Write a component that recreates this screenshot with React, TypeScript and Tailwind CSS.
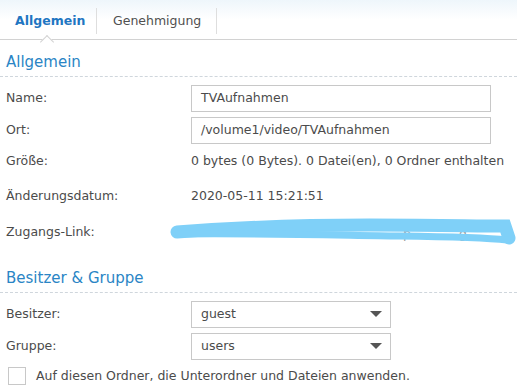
import React from 'react';

const font = { fontFamily: '"DejaVu Sans", Verdana, sans-serif' };

const SectionTitle: React.FC<{ title: string }> = ({ title }) => (
  <div className="px-[6px] pb-[5px] border-b border-dashed border-[#cfd6dc] text-[15px] text-[#2a85c5] leading-[18px]">
    {title}
  </div>
);

const Row: React.FC<{ label: string; children: React.ReactNode; h?: string }> = ({ label, children, h = 'h-[27px]' }) => (
  <div className={`flex items-center ${h}`}>
    <div className="w-[191px] pl-[6px] shrink-0">{label}</div>
    {children}
  </div>
);

const Select: React.FC<{ value: string }> = ({ value }) => (
  <div className="w-[200px] h-[27px] border border-[#c8c8c8] flex items-center justify-between pl-[9px] pr-[8px]">
    <span>{value}</span>
    <svg width="12" height="7" viewBox="0 0 12 7">
      <path d="M0 0 L12 0 L6 6 Z" fill="#555" />
    </svg>
  </div>
);

export default function App() {
  return (
    <div className="w-[517px] h-[392px] overflow-hidden bg-white text-[12.5px] text-[#4b4b4b]" style={font}>
      {/* Tabs */}
      <div className="relative h-[40px] pt-[3px] flex items-center border-b border-[#d2d2d2] bg-gradient-to-b from-[#eef6fb] via-white to-white">
        <div className="relative w-[97px] h-[26px] flex items-center pl-[15px] border-r border-[#dedede] font-bold text-[#1f76c2]">
          Allgemein
          <div className="absolute left-[42px] top-[29px] w-[10px] h-[10px] rotate-45 bg-white border-l border-t border-[#d2d2d2]" />
        </div>
        <div className="w-[120px] h-[26px] flex items-center pl-[16px] border-r border-[#dedede] text-[#505050]">Genehmigung</div>
      </div>

      <div className="pt-[13px]">
        <SectionTitle title="Allgemein" />
        <div className="mt-[8px] flex flex-col gap-[5px]">
          <Row label="Name:">
            <div className="w-[300px] h-[27px] border border-[#c8c8c8] flex items-center px-[9px]">TVAufnahmen</div>
          </Row>
          <Row label="Ort:">
            <div className="w-[300px] h-[27px] border border-[#c8c8c8] flex items-center px-[9px]">/volume1/video/TVAufnahmen</div>
          </Row>
        </div>
        <Row label="Größe:" h="h-[34px]">
          <span>0 bytes (0 Bytes). 0 Datei(en), 0 Ordner enthalten</span>
        </Row>
        <Row label="Änderungsdatum:" h="h-[36px]">
          <span>2020-05-11 15:21:51</span>
        </Row>
        <Row label="Zugangs-Link:" h="h-[36px]">
          <div className="relative flex-1 h-full">
            <span className="absolute left-[212px] top-[11px] text-[#9a9a9a]">p</span>
            <span className="absolute left-[268px] top-[11px] text-[#9a9a9a]">g</span>
            <svg className="absolute left-[-22px] top-[0px]" width="348" height="36" viewBox="0 0 348 36">
              <path d="M8 18 C 60 14, 120 11, 200 11 S 300 12, 336 12 L 340 24" fill="none" stroke="#7fd0f8" strokeWidth="13" strokeLinecap="round" />
              <path d="M10 20 C 80 19, 160 21, 230 22 S 320 24, 338 26" fill="none" stroke="#7fd0f8" strokeWidth="7" strokeLinecap="round" />
            </svg>
          </div>
        </Row>
      </div>

      <div className="pt-[19px]">
        <SectionTitle title="Besitzer & Gruppe" />
        <div className="mt-[8px] flex flex-col gap-[5px]">
          <Row label="Besitzer:">
            <Select value="guest" />
          </Row>
          <Row label="Gruppe:">
            <Select value="users" />
          </Row>
        </div>
        <div className="mt-[7px] flex items-center pl-[8px] gap-[10px]">
          <div className="w-[18px] h-[18px] border border-[#c8c8c8] bg-white" />
          <span>Auf diesen Ordner, die Unterordner und Dateien anwenden.</span>
        </div>
      </div>
    </div>
  );
}
